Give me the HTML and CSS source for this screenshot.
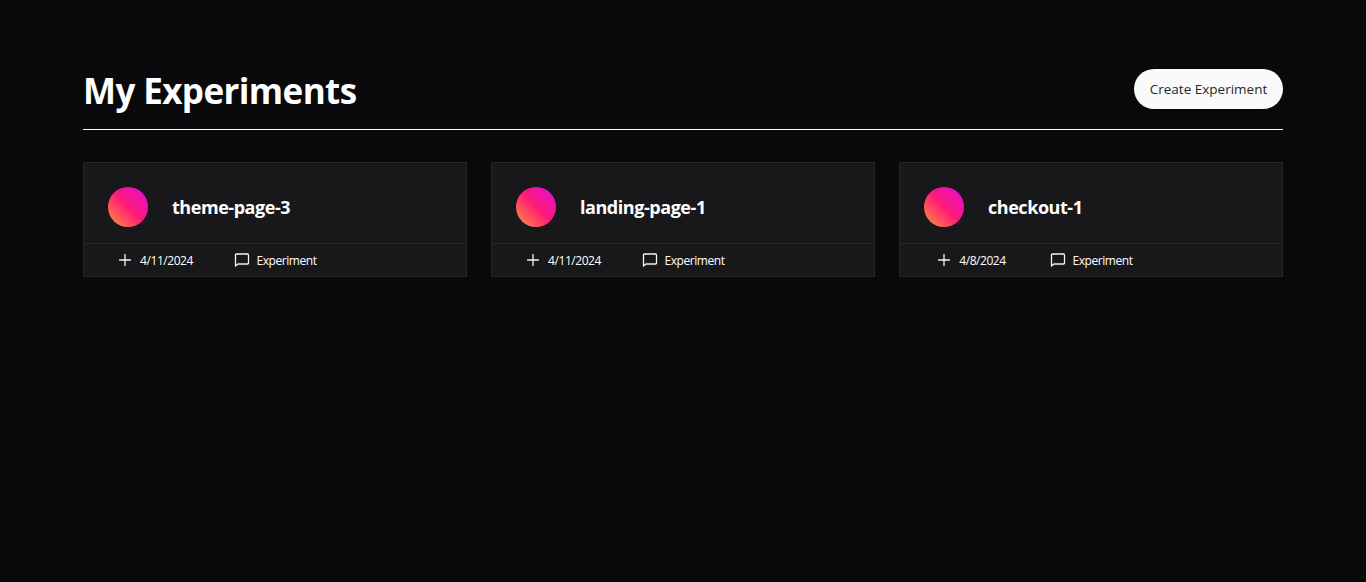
FILE: index.html
```html
<!DOCTYPE html>
<html lang="en">
<head>
  <meta charset="UTF-8">
  <title>My Experiments</title>
  <link rel="stylesheet" href="styles.css">
</head>
<body>
  <main class="page">
    <header class="page-head">
      <h1>My Experiments</h1>
      <button class="create-btn" type="button">Create Experiment</button>
    </header>

    <section class="cards">
      <article class="card">
        <div class="card-top">
          <span class="avatar"></span>
          <h2>theme-page-3</h2>
        </div>
        <div class="card-meta">
          <span class="meta-item">
            <svg class="icon" viewBox="0 0 16 16"><path d="M8 2.5v11M2.5 8h11"/></svg>
            4/11/2024
          </span>
          <span class="meta-item">
            <svg class="icon" viewBox="0 0 16 16"><path d="M1.5 14V3a1 1 0 0 1 1-1h11a1 1 0 0 1 1 1v8a1 1 0 0 1-1 1H4z"/></svg>
            Experiment
          </span>
        </div>
      </article>

      <article class="card">
        <div class="card-top">
          <span class="avatar"></span>
          <h2>landing-page-1</h2>
        </div>
        <div class="card-meta">
          <span class="meta-item">
            <svg class="icon" viewBox="0 0 16 16"><path d="M8 2.5v11M2.5 8h11"/></svg>
            4/11/2024
          </span>
          <span class="meta-item">
            <svg class="icon" viewBox="0 0 16 16"><path d="M1.5 14V3a1 1 0 0 1 1-1h11a1 1 0 0 1 1 1v8a1 1 0 0 1-1 1H4z"/></svg>
            Experiment
          </span>
        </div>
      </article>

      <article class="card">
        <div class="card-top">
          <span class="avatar"></span>
          <h2>checkout-1</h2>
        </div>
        <div class="card-meta">
          <span class="meta-item">
            <svg class="icon" viewBox="0 0 16 16"><path d="M8 2.5v11M2.5 8h11"/></svg>
            4/8/2024
          </span>
          <span class="meta-item">
            <svg class="icon" viewBox="0 0 16 16"><path d="M1.5 14V3a1 1 0 0 1 1-1h11a1 1 0 0 1 1 1v8a1 1 0 0 1-1 1H4z"/></svg>
            Experiment
          </span>
        </div>
      </article>
    </section>
  </main>
</body>
</html>
```

FILE: styles.css
```css
* { box-sizing: border-box; }
html, body { height: 100%; }
body {
  margin: 0;
  background: #09090b;
  color: #fff;
  font-family: "Open Sans", "Noto Sans", sans-serif;
}
.page { padding: 69px 83px 0; }
.page-head {
  display: flex;
  justify-content: space-between;
  align-items: center;
  height: 61px;
  padding-bottom: 21px;
  border-bottom: 1px solid #fafafa;
}
h1 {
  margin: 4px 0 0;
  font-size: 35px;
  font-weight: 700;
  letter-spacing: -0.6px;
  line-height: 40px;
}
.create-btn {
  width: 149px;
  height: 40px;
  border: none;
  border-radius: 20px;
  background: #fafafa;
  color: #27272a;
  font-family: inherit;
  font-size: 13.5px;
  cursor: pointer;
}
.cards {
  display: grid;
  grid-template-columns: repeat(3, 1fr);
  gap: 24px;
  margin-top: 32px;
}
.card {
  height: 115px;
  background: #18181b;
  border: 1px solid #27272a;
}
.card-top {
  display: flex;
  align-items: center;
  gap: 24px;
  height: 81px;
  padding: 8px 0 0 24px;
  border-bottom: 1px solid #27272a;
}
.avatar {
  width: 40px;
  height: 40px;
  border-radius: 50%;
  background: linear-gradient(to top right, #ff9a3c, #ff1a75 50%, #e00ee0);
}
h2 {
  margin: 0;
  font-size: 18px;
  font-weight: 700;
  letter-spacing: -0.45px;
}
.card-meta {
  display: grid;
  grid-template-columns: 120px 120px;
  align-items: center;
  height: 32px;
  padding-left: 11px;
  font-size: 12px;
  font-weight: 500;
  letter-spacing: -0.45px;
}
.meta-item {
  display: flex;
  justify-content: center;
  align-items: center;
  gap: 7px;
}
.icon {
  width: 16px;
  height: 16px;
  fill: none;
  stroke: #f4f4f5;
  stroke-width: 1.3;
  stroke-linecap: round;
  stroke-linejoin: round;
}
```
